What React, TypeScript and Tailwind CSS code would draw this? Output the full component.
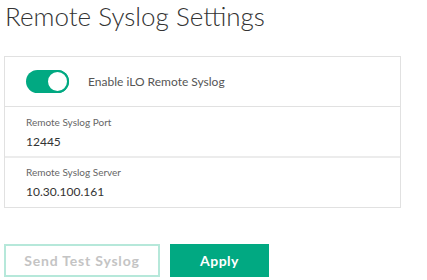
export default function App() {
  return (
    <div className="w-[427px] h-[280px] overflow-hidden bg-white font-['Lato','Liberation_Sans',sans-serif]">
      {/* Title */}
      <h1 className="pl-[5px] pt-[1px] text-[26px] leading-[31px] font-light text-[#333]">
        Remote Syslog Settings
      </h1>

      {/* Settings card */}
      <div className="mt-[24px] ml-[4px] w-[397px] border border-[#e1e1e1]">
        <div className="h-[50px] flex items-center pl-[21px] border-b border-[#e1e1e1]">
          <div className="relative w-[43px] h-[23px] rounded-full bg-[#01a982]">
            <div className="absolute right-0 top-0 w-[23px] h-[23px] rounded-full bg-white border-2 border-[#01a982]" />
          </div>
          <span className="ml-[19px] text-[12px] text-[#555]">Enable iLO Remote Syslog</span>
        </div>
        <div className="h-[51px] pl-[21px] pt-[8px] border-b-2 border-[#ececec]">
          <div className="text-[10px] leading-[14px] text-[#666]">Remote Syslog Port</div>
          <div className="mt-[5px] text-[12px] leading-[16px] text-[#333]">12445</div>
        </div>
        <div className="h-[49px] pl-[21px] pt-[7px]">
          <div className="text-[10px] leading-[14px] text-[#666]">Remote Syslog Server</div>
          <div className="mt-[5px] text-[12px] leading-[16px] text-[#333]">10.30.100.161</div>
        </div>
      </div>

      {/* Actions */}
      <div className="mt-[36px] ml-[4px] flex gap-[10px]">
        <button className="w-[156px] h-[33px] border-2 border-[#b6e8da] text-[14px] font-bold tracking-[0.8px] text-[#c4c4c4] bg-white">
          Send Test Syslog
        </button>
        <button className="w-[99px] h-[33px] bg-[#01a982] text-[14px] font-bold tracking-[0.5px] text-white">
          Apply
        </button>
      </div>
    </div>
  );
}
